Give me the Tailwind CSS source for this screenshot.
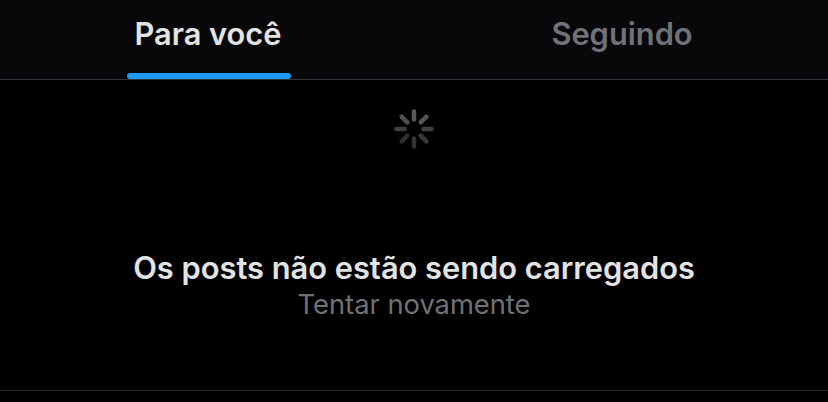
<!DOCTYPE html>
<html>
<head>
<meta charset="utf-8">
<script src="https://cdn.jsdelivr.net/npm/@tailwindcss/browser@4"></script>
</head>
<body class="m-0 bg-black">
<div class="w-[828px] h-[402px] overflow-hidden bg-black flex flex-col font-['Inter','Liberation_Sans',sans-serif]">
  <div class="h-[80px] shrink-0 bg-[#08080a] border-b border-[#333538] grid grid-cols-2">
    <div class="relative flex justify-center">
      <span class="ml-[2px] mt-[16px] text-[30.8px] leading-[36px] font-semibold text-[#e3e3e3]">Para você</span>
      <div class="absolute left-[127px] top-[73px] w-[164px] h-[6px] rounded-full bg-[#1d9bf0]"></div>
    </div>
    <div class="flex justify-center">
      <span class="mr-[-2px] mt-[16px] text-[30.8px] leading-[36px] font-semibold text-[#6f7277]">Seguindo</span>
    </div>
  </div>
  <div class="h-[311px] shrink-0 border-b border-[#2a2b2d] flex flex-col items-center">
    <svg class="mt-[29px] ml-[-1px]" width="40" height="40" viewBox="0 0 40 40" fill="none" stroke-width="4.5" stroke-linecap="round">
      <line x1="20" y1="2.5" x2="20" y2="10.5" stroke="#5a5a5a"/>
      <line x1="32.4" y1="7.6" x2="26.7" y2="13.3" stroke="#555555"/>
      <line x1="37.5" y1="20" x2="29.5" y2="20" stroke="#404040"/>
      <line x1="32.4" y1="32.4" x2="26.7" y2="26.7" stroke="#383838"/>
      <line x1="20" y1="37.5" x2="20" y2="29.5" stroke="#333333"/>
      <line x1="7.6" y1="32.4" x2="13.3" y2="26.7" stroke="#2e2e2e"/>
      <line x1="2.5" y1="20" x2="10.5" y2="20" stroke="#404040"/>
      <line x1="7.6" y1="7.6" x2="13.3" y2="13.3" stroke="#505050"/>
    </svg>
    <p class="mt-[101px] text-[30.8px] leading-[36px] font-semibold text-[#e3e3e3]">Os posts não estão sendo carregados</p>
    <p class="mt-[2px] text-[27.3px] leading-[34px] text-[#6f7277]">Tentar novamente</p>
  </div>
</div>
</body>
</html>
